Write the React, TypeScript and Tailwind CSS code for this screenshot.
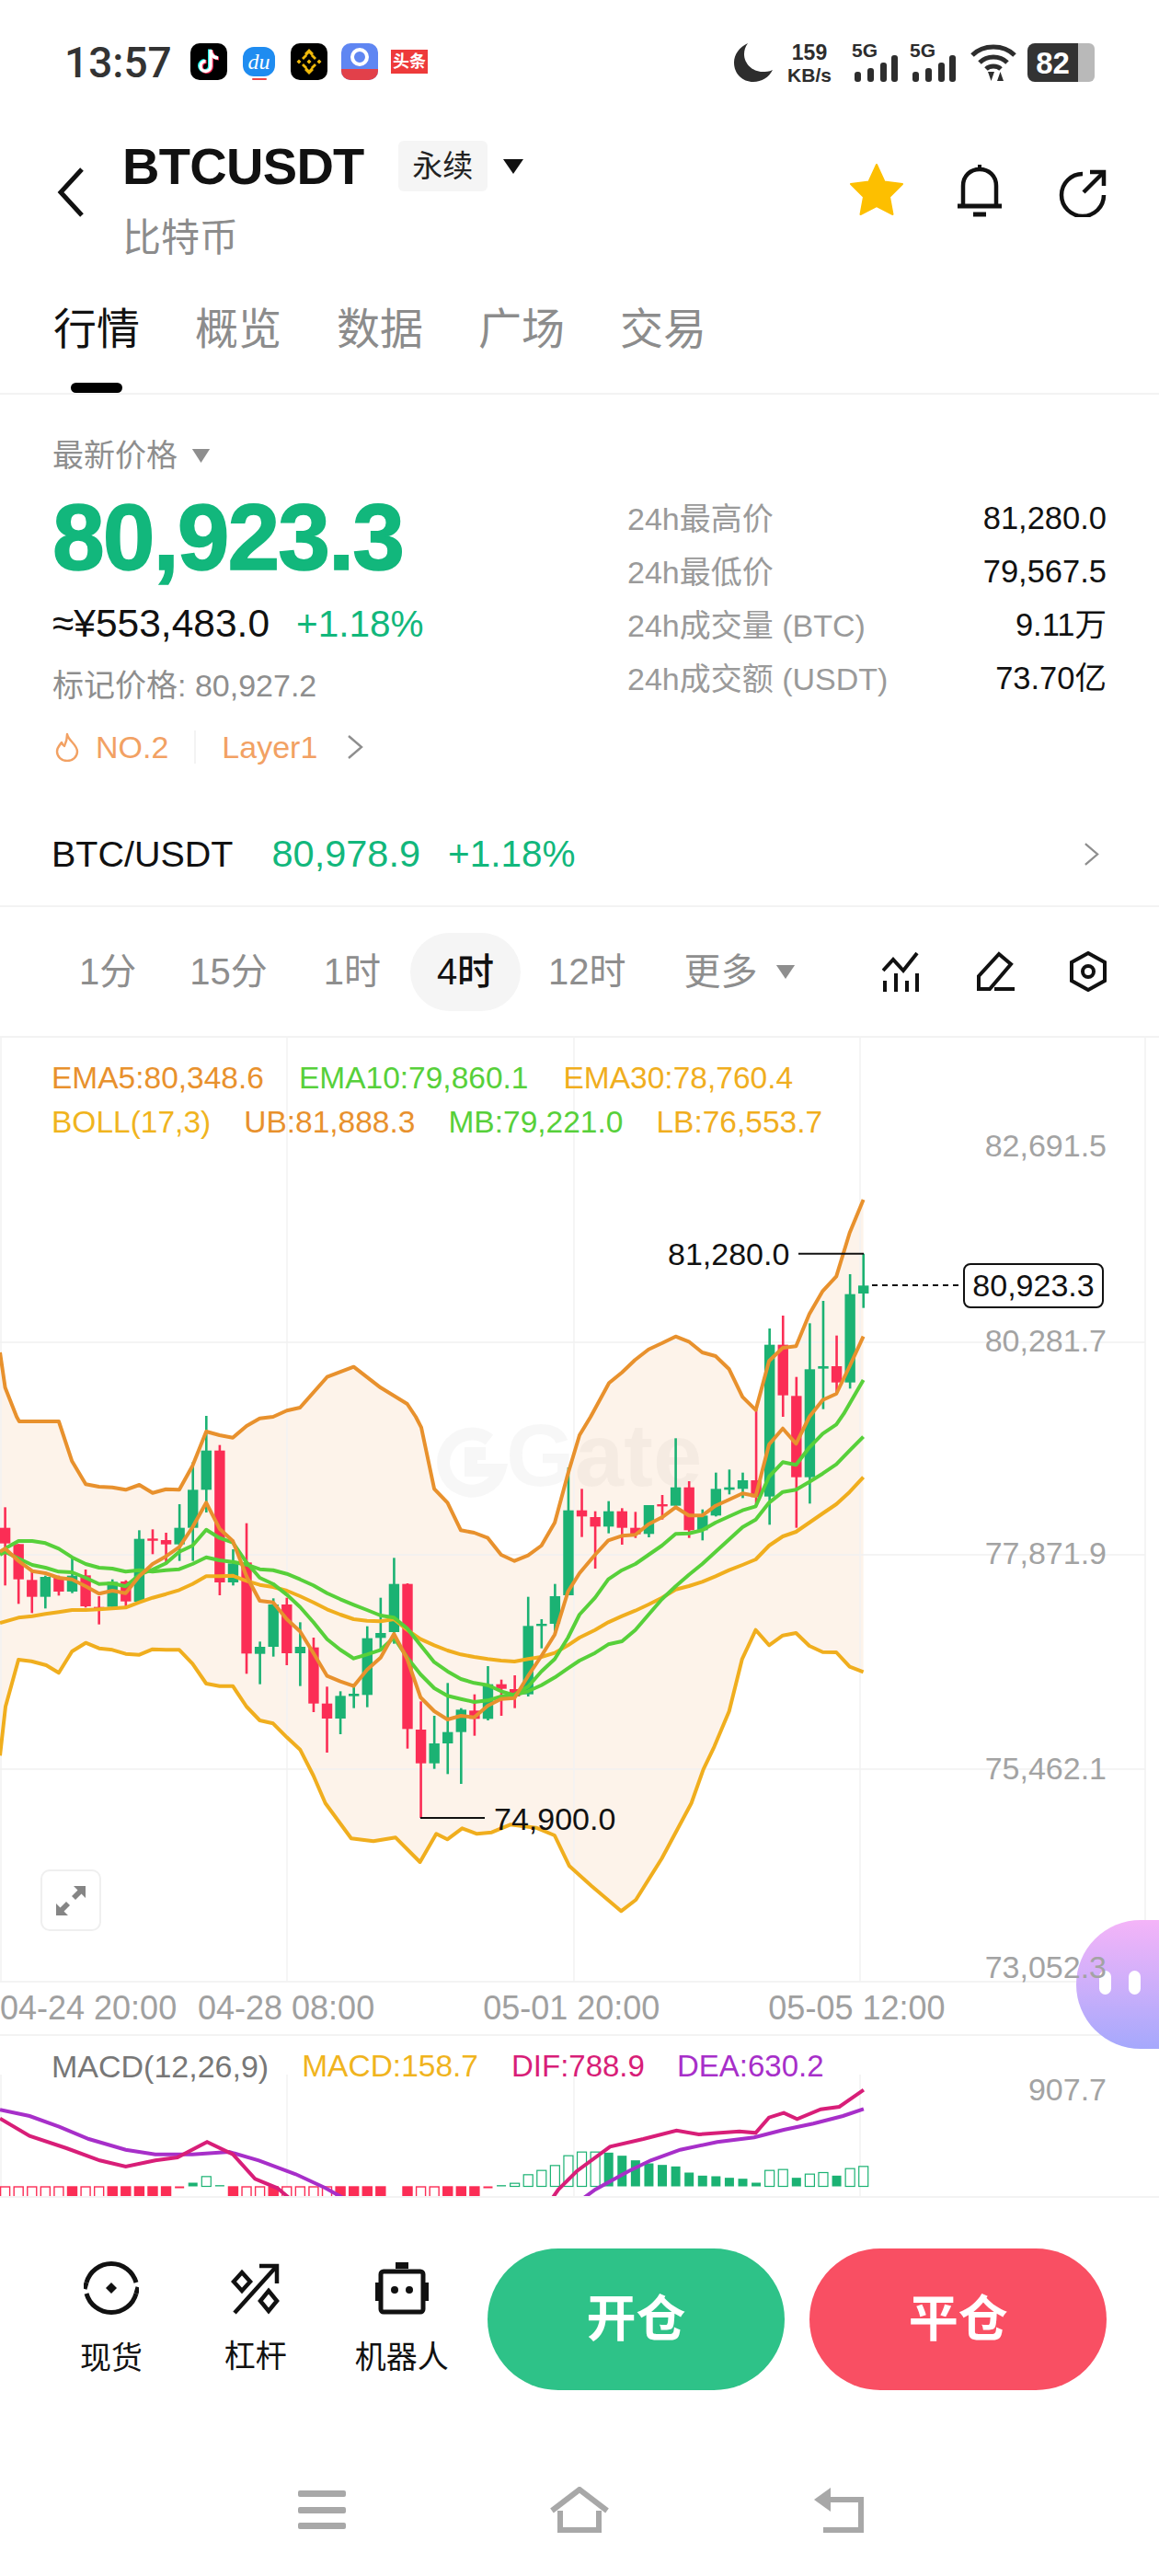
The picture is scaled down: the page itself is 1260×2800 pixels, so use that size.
import React from "react";

const L = (x: number) => x / 2.489;
const R = (x: number) => 630 + x / 2.489;
const Z = (x: number) => x / 1.244;
const Y3 = (y: number) => 1120 + y / 3;
const Y5 = (y: number) => 1540 + y / 3;
const Y7 = (y: number) => 1960 + y / 3;

type P = [number, number];
function seg(fx: (n: number) => number, fy: (n: number) => number, v: number[]): P[] {
  const out: P[] = [];
  for (let i = 0; i < v.length; i += 2) out.push([fx(v[i]), fy(v[i + 1])]);
  return out;
}
const str = (p: P[]) => p.map((a) => a[0].toFixed(1) + "," + a[1].toFixed(1)).join(" ");

const UB: P[] = [
  ...seg(L, Y3, [0, 1050, 14, 1165, 45, 1260]),
  ...seg(L, Y5, [52, 15, 159, 15, 195, 145, 232, 220, 268, 228, 304, 230, 340, 238, 377, 222, 413, 248, 449, 236, 485, 238, 521, 160, 558, 48, 594, 60, 630, 68, 667, 30, 703, 5]),
  ...seg(L, Y3, [739, 1260, 776, 1240, 812, 1230, 885, 1130, 957, 1097, 1030, 1165, 1102, 1218, 1125, 1260]),
  ...seg(L, Y5, [1140, 35, 1175, 235, 1211, 280, 1247, 370, 1283, 378, 1320, 395, 1356, 450, 1392, 470, 1429, 452, 1465, 420, 1501, 345, 1537, 185, 1568, 60]),
  ...seg(R, Y3, [30, 1260, 80, 1150, 115, 1115, 150, 1075, 187, 1040, 223, 1020, 260, 998, 296, 1015, 332, 1050, 368, 1062, 405, 1105, 441, 1195, 477, 1238, 513, 1078, 550, 1035, 586, 1030, 622, 925, 658, 850, 695, 802, 731, 660, 768, 552]),
];
const LB: P[] = [
  ...seg(L, Y5, [0, 1105, 15, 945, 50, 792, 85, 797, 125, 810, 159, 835, 195, 765, 232, 737, 268, 755, 304, 760, 340, 773, 377, 776, 413, 758, 449, 760, 485, 760, 521, 805, 558, 870, 594, 878, 630, 878, 667, 945, 703, 990, 739, 1000, 776, 1045, 812, 1085, 848, 1170]),
  ...seg(Z, Y7, [440, 0, 475, 115, 505, 124, 535, 112, 568, 192, 590, 100, 605, 118, 625, 82, 645, 100, 665, 95, 690, 70, 725, 80, 750, 105, 770, 205, 800, 270, 840, 352, 860, 315, 895, 180, 935, 0]),
  ...seg(R, Y5, [335, 1150, 365, 1075, 405, 960, 440, 790, 477, 695, 513, 745, 550, 713, 586, 705, 622, 747, 658, 767, 695, 768, 731, 815, 768, 832]),
];
const EMA5: P[] = [
  ...seg(L, Y5, [0, 440, 14, 430, 50, 470, 87, 503, 123, 510, 159, 525, 195, 530, 232, 553, 268, 577, 304, 567, 340, 575, 377, 520, 413, 480, 449, 455, 485, 425, 521, 360, 558, 280, 594, 365, 630, 405, 667, 520, 703, 600, 739, 605, 776, 660, 812, 700, 848, 770, 885, 845, 921, 863, 957, 878, 993, 825, 1030, 785, 1066, 708, 1102, 790, 1138, 915, 1175, 960, 1211, 987, 1247, 975, 1283, 980, 1320, 942, 1356, 920, 1392, 917, 1429, 845, 1465, 780, 1501, 710, 1537, 570]),
  ...seg(R, Y5, [0, 510, 42, 450, 78, 403, 115, 388, 151, 385, 187, 350, 223, 328, 260, 295, 296, 322, 332, 322, 368, 290, 405, 270, 441, 250, 477, 258, 513, 90, 550, 38, 586, 88, 622, 0]),
  ...seg(R, Y3, [658, 1205, 695, 1185, 731, 1095, 768, 998]),
];
const EMA30: P[] = [
  ...seg(L, Y5, [0, 672, 50, 655, 87, 650, 123, 643, 159, 637, 195, 630, 232, 630, 268, 628, 304, 625, 340, 622, 377, 605, 413, 590, 449, 578, 485, 565, 521, 545, 558, 520, 594, 520, 630, 518, 667, 535, 703, 548, 739, 555, 776, 567, 812, 585, 848, 605, 885, 628, 921, 645, 957, 660, 993, 665, 1030, 667, 1066, 660, 1102, 695, 1138, 725, 1175, 745, 1211, 762, 1247, 775, 1283, 783, 1320, 790, 1356, 795, 1392, 798, 1429, 790, 1465, 783, 1501, 770, 1537, 745]),
  ...seg(R, Y5, [0, 720, 42, 695, 78, 670, 115, 650, 151, 632, 187, 612, 223, 590, 260, 563, 296, 552, 332, 538, 368, 520, 405, 500, 441, 483, 477, 465, 513, 420, 550, 390, 586, 375, 622, 345, 658, 315, 695, 285, 731, 245, 768, 197]),
];
const MB: P[] = [
  ...seg(L, Y5, [0, 445, 20, 425, 50, 405, 87, 405, 123, 412, 159, 430, 195, 458, 232, 480, 268, 492, 304, 495, 340, 505, 377, 500, 413, 505, 449, 500, 485, 497, 521, 480, 558, 458, 594, 468, 630, 473, 667, 482, 703, 497, 739, 500, 776, 512, 812, 530, 848, 550, 885, 575, 921, 595, 957, 613, 993, 630, 1030, 648, 1066, 655, 1102, 690, 1138, 745, 1175, 800, 1211, 830, 1247, 855, 1283, 868, 1320, 875, 1356, 895, 1392, 908, 1429, 895, 1465, 875, 1501, 850, 1537, 820]),
  ...seg(R, Y5, [0, 795, 42, 770, 78, 742, 115, 732, 151, 695, 187, 645, 223, 595, 260, 553, 296, 515, 332, 480, 368, 440, 405, 400, 441, 360, 477, 335, 513, 280, 550, 245, 586, 238, 622, 212, 658, 185, 695, 155, 731, 110, 768, 65]),
];
const EMA10: P[] = [
  ...seg(L, Y5, [0, 450, 14, 440, 50, 462, 87, 483, 123, 492, 159, 505, 195, 507, 232, 525, 268, 545, 304, 543, 340, 553, 377, 515, 413, 498, 449, 478, 485, 440, 521, 420, 558, 368, 594, 395, 630, 410, 667, 475, 703, 525, 739, 545, 776, 580, 812, 620, 848, 670, 885, 725, 921, 760, 957, 788, 993, 775, 1030, 760, 1066, 720, 1102, 785, 1138, 840, 1175, 885, 1211, 910, 1247, 920, 1283, 930, 1320, 925, 1356, 912, 1392, 905, 1429, 880, 1465, 830, 1501, 790, 1537, 720]),
  ...seg(R, Y5, [0, 645, 42, 590, 78, 530, 115, 500, 151, 480, 187, 450, 223, 420, 260, 382, 296, 380, 332, 370, 368, 345, 405, 325, 441, 305, 477, 292, 513, 195, 550, 148, 586, 157, 622, 100, 658, 55, 695, 25, 715, -10]),
  ...seg(R, Y3, [768, 1140]),
];

// [isGreen, wickTop, bodyTop, bodyBottom, wickBottom] in lower-crop units
const C: [number, number, number, number, number][] = [
  [0, 295, 362, 413, 550], [0, 415, 415, 530, 610], [0, 500, 532, 587, 640], [1, 518, 522, 587, 625], [0, 518, 525, 570, 583],
  [1, 462, 518, 570, 575], [0, 498, 517, 618, 622], [0, 585, 620, 623, 677], [1, 530, 538, 620, 620], [0, 533, 537, 602, 620],
  [1, 370, 398, 603, 605], [0, 367, 397, 401, 448], [0, 378, 402, 416, 480], [1, 285, 362, 416, 470], [1, 148, 238, 362, 470],
  [1, -3, 110, 238, 312], [0, 92, 110, 540, 582], [1, 432, 478, 540, 550], [0, 347, 475, 772, 838], [1, 733, 750, 773, 872],
  [1, 592, 612, 750, 782], [0, 590, 612, 771, 810], [1, 670, 750, 771, 878], [0, 720, 752, 935, 963], [0, 880, 935, 984, 1095],
  [1, 895, 910, 984, 1035], [1, 870, 903, 911, 950], [1, 683, 722, 907, 947], [1, 590, 705, 721, 760], [1, 460, 545, 702, 740],
  [0, 543, 545, 1018, 1082], [0, 928, 1020, 1130, 1308], [1, 975, 1065, 1130, 1148], [1, 868, 1028, 1065, 1165], [1, 950, 955, 1028, 1197],
  [0, 905, 958, 985, 1040], [1, 813, 872, 985, 990], [0, 857, 872, 887, 975], [0, 843, 888, 912, 950], [1, 587, 682, 905, 912],
  [1, 660, 675, 682, 755], [1, 545, 585, 675, 700], [1, 165, 305, 582, 582], [0, 235, 305, 325, 392], [0, 308, 327, 358, 495],
  [1, 275, 308, 358, 380], [0, 298, 308, 362, 417], [0, 310, 362, 383, 395], [1, 288, 288, 382, 393], [0, 255, 285, 292, 335],
  [1, 70, 230, 290, 295], [0, 210, 230, 370, 395], [1, 302, 322, 370, 403], [1, 182, 235, 322, 325], [1, 172, 230, 238, 253],
  [1, 182, 207, 235, 265], [0, -30, 207, 262, 290], [1, -288, -235, 260, 352], [0, -330, -235, -70, 0], [0, -130, -68, 197, 362],
  [1, -305, -155, 197, 283], [1, -378, -165, -157, -25], [0, -265, -165, -112, -80], [1, -465, -400, -112, -92], [1, -532, -428, -402, -355],
];

const green = "#1bb273";
const red = "#fb2d55";
const orange = "#e8912d";
const yellow = "#f0ae1e";
const lime = "#57d03a";

const cx = (i: number) => 5.6 + 14.58 * i;

const RED_BARS: [number, boolean][] = [
  [0, false], [1, false], [2, false], [3, false], [4, false], [5, true], [6, false], [7, false], [8, true], [9, true], [10, true], [11, true], [12, true],
  [17, true], [18, false], [19, false], [20, true], [21, false], [22, false], [23, false], [24, false], [25, true], [26, true], [27, true], [28, true],
  [30, true], [31, false], [32, false], [33, true], [34, true], [35, true],
];
const GREEN_BARS: [number, number, boolean][] = [
  [14, 12, true], [15, 32, false], [16, 4, true], [37, 4, true], [38, 10, false], [39, 38, false], [40, 52, false], [41, 68, false], [42, 100, false], [43, 112, false],
  [44, 112, false], [45, 110, true], [46, 100, true], [47, 85, true], [48, 75, true], [49, 70, true], [50, 65, true], [51, 45, true], [52, 35, true], [53, 33, true],
  [54, 28, true], [55, 25, true], [56, 12, true], [57, 52, false], [58, 55, false], [59, 28, true], [60, 40, false], [61, 45, false], [62, 35, true], [63, 58, false], [64, 65, false],
];
const DEA1 = seg(Z, Y7, [0, 1000, 40, 1020, 80, 1055, 120, 1095, 170, 1130, 210, 1145, 260, 1145, 310, 1137, 350, 1165, 400, 1210, 440, 1255, 470, 1295]);
const DEA2 = seg(Z, Y7, [785, 1295, 805, 1260, 850, 1200, 880, 1165, 920, 1130, 970, 1105, 1020, 1090, 1060, 1065, 1100, 1045, 1140, 1020, 1168, 997]);
const DIF1 = seg(Z, Y7, [0, 1028, 40, 1085, 90, 1125, 135, 1165, 170, 1185, 210, 1165, 240, 1155, 280, 1105, 315, 1145, 345, 1225, 375, 1255, 395, 1295]);
const DIF2 = seg(Z, Y7, [745, 1295, 755, 1260, 780, 1200, 825, 1120, 870, 1095, 915, 1067, 945, 1080, 1000, 1070, 1022, 1075, 1040, 1025, 1060, 1010, 1078, 1030, 1110, 998, 1135, 990, 1168, 935]);

const LW = "4";

function MainChart() {
  return (
    <svg className="absolute left-0 top-0" width="1260" height="1025" viewBox="0 1128 1260 1025">
      <polygon points={str([...UB, ...[...LB].reverse()])} fill="#fdf3ea" />
      {[1459, 1690, 1923].map((y) => (
        <line key={y} x1="0" x2="1245" y1={y} y2={y} stroke="#f0f0f0" strokeWidth="1.5" />
      ))}
      {[1, 312, 624, 935, 1245].map((x) => (
        <line key={x} x1={x} x2={x} y1="1128" y2="2153" stroke="#f2f2f2" strokeWidth="1.5" />
      ))}
      <path d="M532 1565 A31 31 0 1 0 543 1598 L512 1598 L512 1580 L528 1580" fill="none" stroke="#000" strokeOpacity="0.03" strokeWidth="14" />
      <text x="550" y="1615" fontFamily="Liberation Sans" fontWeight="700" fontSize="96" fill="#000" fillOpacity="0.03">Gate</text>
      {C.map((c, i) => {
        const x = cx(i);
        const col = c[0] ? green : red;
        return (
          <g key={i}>
            <rect x={x - 1.3} y={Y5(c[1])} width="2.6" height={(c[4] - c[1]) / 3} fill={col} />
            <rect x={x - 5.7} y={Y5(c[2])} width="11.4" height={Math.max(2.4, (c[3] - c[2]) / 3)} fill={col} />
          </g>
        );
      })}
      <polyline points={str(UB)} fill="none" stroke={orange} strokeWidth={LW} strokeLinejoin="round" />
      <polyline points={str(LB)} fill="none" stroke={yellow} strokeWidth={LW} strokeLinejoin="round" />
      <polyline points={str(EMA30)} fill="none" stroke={yellow} strokeWidth={LW} strokeLinejoin="round" />
      <polyline points={str(MB)} fill="none" stroke={lime} strokeWidth={LW} strokeLinejoin="round" />
      <polyline points={str(EMA10)} fill="none" stroke={lime} strokeWidth={LW} strokeLinejoin="round" />
      <polyline points={str(EMA5)} fill="none" stroke={orange} strokeWidth={LW} strokeLinejoin="round" />
      <path d="M868 1362.7H939" stroke="#111" strokeWidth="2" />
      <path d="M457 1976H527" stroke="#111" strokeWidth="2" />
      <path d="M948 1397H1046" stroke="#111" strokeWidth="2" strokeDasharray="6 5" />
    </svg>
  );
}

function MacdChart() {
  return (
    <svg className="absolute left-0 top-0" width="1260" height="175" viewBox="0 2213 1260 175">
      {[1, 312, 624, 935].map((x) => (
        <line key={x} x1={x} x2={x} y1="2255" y2="2388" stroke="#f2f2f2" strokeWidth="1.5" />
      ))}
      {RED_BARS.map(([i, f]) => (
        <rect key={i} x={cx(i) - 5} y="2377" width="10" height="14" fill={f ? red : "#fff"} stroke={red} strokeWidth="1.4" />
      ))}
      <rect x={cx(13) - 5} y="2376.5" width="10" height="2" fill={red} />
      <rect x={cx(36) - 5} y="2376.5" width="10" height="2" fill={red} />
      {GREEN_BARS.map(([i, h, f]) => (
        <rect key={i} x={cx(i) - 5} y={2376.5 - h / 3} width="10" height={h / 3} fill={f ? green : "#fff"} stroke={green} strokeWidth={f ? 0 : 1.2} />
      ))}
      <polyline points={str(DEA1)} fill="none" stroke="#a72fc9" strokeWidth={LW} />
      <polyline points={str(DIF1)} fill="none" stroke="#d81e78" strokeWidth={LW} />
      <polyline points={str(DIF2)} fill="none" stroke="#d81e78" strokeWidth={LW} />
      <polyline points={str(DEA2)} fill="none" stroke="#a72fc9" strokeWidth={LW} />
    </svg>
  );
}

function Signal() {
  return (
    <div className="relative h-[42px] w-[47px]">
      <span className="absolute left-[-3px] top-[-1px] text-[21px] leading-[18px] font-bold text-[#2d2d2d]">5G</span>
      <svg className="absolute left-0 top-0" width="47" height="42" viewBox="0 0 47 42" fill="#2d2d2d">
        <rect x="0" y="31" width="7" height="11" rx="3" />
        <rect x="14" y="27" width="7" height="15" rx="3" />
        <rect x="28" y="21" width="7" height="21" rx="3" />
        <rect x="40" y="13" width="7" height="29" rx="3" />
      </svg>
    </div>
  );
}

function Caret({ w, h, c }: { w: number; h: number; c: string }) {
  return (
    <svg width={w} height={h} viewBox="0 0 24 16" preserveAspectRatio="none">
      <path d="M1 0H23L12 16Z" fill={c} />
    </svg>
  );
}

function Chevron({ c, w, h }: { c: string; w: number; h: number }) {
  return (
    <svg width={w} height={h} viewBox="0 0 18 26" fill="none">
      <path d="M2 1L16 13L2 25" stroke={c} strokeWidth="2.4" />
    </svg>
  );
}

function TF({ t, cls }: { t: string; cls: string }) {
  return <span className={"text-[40px] leading-[46px] text-[#8e8e8e] " + cls}>{t}</span>;
}

function Stat({ a, b }: { a: string; b: string }) {
  return (
    <div className="flex h-[58px] items-center justify-between">
      <span className="text-[34px] text-[#9a9a9a]">{a}</span>
      <span className="text-[34.5px] text-[#111]">{b}</span>
    </div>
  );
}

export default function App() {
  return (
    <div className="relative h-[2800px] w-[1260px] overflow-hidden bg-white [font-family:'Liberation_Sans','Noto_Sans_CJK_SC',sans-serif] text-[#111]">
      {/* status bar */}
      <div className="flex h-[100px] items-start pl-[70px] pt-[47px] pr-[70px]">
        <span className="w-[117px] text-[46px] leading-[42px] font-medium text-[#333] [font-family:Roboto,sans-serif]">13:57</span>
        <div className="ml-[20px] flex gap-[14.5px]">
          <div className="flex h-[40px] w-[40px] items-center justify-center rounded-[10px] bg-black">
            <svg width="26" height="30" viewBox="0 0 26 30" fill="none">
              <path d="M15 2V20a5.5 5.5 0 1 1-5.5-5.5" stroke="#25f4ee" strokeWidth="4" transform="translate(-1 -0.5)" />
              <path d="M15 4c1 4 4 7 8 7" stroke="#25f4ee" strokeWidth="4" transform="translate(-1 -0.5)" />
              <path d="M15 2V20a5.5 5.5 0 1 1-5.5-5.5" stroke="#fe2c55" strokeWidth="4" transform="translate(1 0.5)" />
              <path d="M15 4c1 4 4 7 8 7" stroke="#fe2c55" strokeWidth="4" transform="translate(1 0.5)" />
              <path d="M15 2V20a5.5 5.5 0 1 1-5.5-5.5" stroke="#fff" strokeWidth="3.4" />
              <path d="M15 4c1 4 4 7 8 7" stroke="#fff" strokeWidth="3.4" />
            </svg>
          </div>
          <div className="relative flex h-[40px] w-[40px] items-start justify-center">
            <div className="mt-[4px] flex h-[32px] w-[35px] items-center justify-center rounded-[12px] bg-[#1f8cf0] text-[24px] italic leading-none text-white [font-family:'Liberation_Serif',serif]">du</div>
            <div className="absolute bottom-0 h-[2px] w-[16px] rounded-full bg-[#e44]" />
          </div>
          <div className="flex h-[40px] w-[40px] items-center justify-center rounded-[10px] bg-black">
            <svg width="30" height="30" viewBox="0 0 30 30" fill="#f0b90b">
              <path d="M15 1l5 5-2.500 2.500L15 6l-2.500 2.500L10 6zM15 24l2.500-2.500L20 24l-5 5-5-5 2.500-2.500zM4 12.500L6.500 15 4 17.500 1.500 15zM26 12.500L28.500 15 26 17.500 23.500 15zM15 12.500l2.500 2.500-2.500 2.500-2.500-2.500zM9 13l-2-2 4-4 2 2zM21 13l2-2-4-4-2 2zM9 17l-2 2 4 4 2-2zM21 17l2 2-4 4-2-2z" />
            </svg>
          </div>
          <div className="relative flex h-[40px] w-[40px] items-start justify-center overflow-hidden rounded-[10px] bg-[#5f86f2]">
            <div className="mt-[5px] h-[20px] w-[20px] rounded-full border-[4px] border-white" />
            <div className="absolute bottom-0 h-[12px] w-full bg-[#e2404a]" />
          </div>
          <div className="flex h-[40px] w-[40px] items-center justify-center bg-white">
            <div className="flex h-[26px] w-full items-center justify-center bg-[#ee3a3a] text-[18px] font-bold leading-none text-white">头条</div>
          </div>
        </div>
        <div className="ml-auto flex items-start">
          <svg width="42" height="42" viewBox="0 0 42 42">
            <path d="M15 0C6 4 0 12 0 21c0 12 9 21 21 21 9 0 17-5 21-13-4 2-8 2-11 2C20 31 11 22 11 12c0-4 1-8 4-12z" fill="#2d2d2d" />
          </svg>
          <div className="ml-[15px] flex w-[50px] flex-col items-center font-bold text-[#2d2d2d]">
            <span className="text-[23px] leading-[20px]">159</span>
            <span className="mt-[7px] text-[21px] leading-[15px]">KB/s</span>
          </div>
          <div className="ml-[24px]"><Signal /></div>
          <div className="ml-[16px]"><Signal /></div>
          <svg className="ml-[16px]" width="50" height="41" viewBox="0 0 50 41" fill="none">
            <path d="M2 13C14 1 36 1 48 13" stroke="#2d2d2d" strokeWidth="5" />
            <path d="M10 21C18 13 32 13 40 21" stroke="#2d2d2d" strokeWidth="5" />
            <path d="M17 28C21 24 29 24 33 28" stroke="#2d2d2d" strokeWidth="5" />
            <path d="M19 31h7l-3.500 10zM29 41h7l-3.500-10z" fill="#2d2d2d" />
          </svg>
          <div className="ml-[12px] flex h-[42px] w-[73px]">
            <div className="flex h-full w-[55px] items-center justify-center rounded-l-[8px] bg-[#333] text-[33px] font-bold leading-none text-white">82</div>
            <div className="h-full w-[18px] rounded-r-[6px] bg-[#b9b9b9]" />
          </div>
        </div>
      </div>

      {/* header */}
      <div className="flex h-[200px]">
        <svg className="ml-[62px] mt-[82px]" width="30" height="54" viewBox="0 0 30 54" fill="none">
          <path d="M27 2L4 27L27 52" stroke="#111" strokeWidth="5" />
        </svg>
        <div className="ml-[41px] flex flex-col">
          <div className="mt-[53px] flex items-center">
            <span className="text-[56px] leading-[54px] font-bold tracking-[-0.7px]">BTCUSDT</span>
            <span className="ml-[37px] flex h-[55px] w-[97px] items-center justify-center rounded-[6px] bg-[#f5f5f5] text-[33px] text-[#222]">永续</span>
            <span className="ml-[16px]"><Caret w={24} h={16} c="#111" /></span>
          </div>
          <span className="mt-[29px] text-[42px] leading-[44px] text-[#8c8c8c]">比特币</span>
        </div>
        <div className="ml-auto mr-[56px] mt-[78px] flex items-start">
          <svg width="60" height="56" viewBox="0 0 60 56">
            <path d="M30 1L38.500 19.500L58 22L44 36L47.500 55L30 46L12.500 55L16 36L2 22L21.500 19.500Z" fill="#fdbf00" stroke="#fdbf00" strokeWidth="2" strokeLinejoin="round" />
          </svg>
          <svg className="ml-[57px]" width="50" height="58" viewBox="0 0 50 58" fill="none">
            <path d="M25 1V7" stroke="#111" strokeWidth="4" />
            <path d="M7 46V24C7 13 15 6 25 6S43 13 43 24V46" stroke="#111" strokeWidth="4.500" />
            <path d="M1 46H49" stroke="#111" strokeWidth="5" />
            <path d="M18 55H32" stroke="#111" strokeWidth="5" />
          </svg>
          <svg className="ml-[60px] mt-[6px]" width="54" height="52" viewBox="0 0 54 52" fill="none">
            <path d="M27 5A23 23 0 1 0 50 28" stroke="#111" strokeWidth="4.500" />
            <path d="M28 25L50 3" stroke="#111" strokeWidth="4.500" />
            <path d="M35 3H50V18" stroke="#111" strokeWidth="4.500" />
          </svg>
        </div>
      </div>

      {/* tabs */}
      <div className="relative h-[129px] border-b-2 border-[#f3f3f3] pl-[58px]">
        <div className="flex gap-[60px] pt-[33px] text-[47px] leading-[50px] text-[#8c8c8c]">
          <span className="text-[#111]">行情</span>
          <span>概览</span>
          <span>数据</span>
          <span>广场</span>
          <span>交易</span>
        </div>
        <div className="absolute bottom-[0px] left-[77px] h-[11px] w-[56px] rounded-full bg-black" />
      </div>

      {/* ticker */}
      <div className="relative h-[384px] pl-[57px] pr-[57px]">
        <div className="flex justify-between">
          <div className="flex flex-col">
            <div className="mt-[47px] flex items-center">
              <span className="text-[34px] leading-[38px] text-[#8e8e8e]">最新价格</span>
              <span className="ml-[15px]"><Caret w={21} h={15} c="#8e8e8e" /></span>
            </div>
            <span className="mt-[20px] text-[102px] leading-[100px] font-bold tracking-[-2px] text-[#12b77c] [-webkit-text-stroke:1.5px_#12b77c]">80,923.3</span>
            <div className="mt-[21px] flex items-center text-[42.5px] leading-[46px]">
              <span>≈¥553,483.0</span>
              <span className="ml-[29px] text-[40.5px] text-[#12b77c]">+1.18%</span>
            </div>
            <span className="mt-[24px] text-[34px] leading-[40px] text-[#8e8e8e]">标记价格: 80,927.2</span>
            <div className="mt-[27px] flex items-center text-[34px] leading-[40px] text-[#f2a163]">
              <svg className="ml-[3px]" width="26" height="32" viewBox="0 0 26 32" fill="none">
                <path d="M13 2C14 9 24 13 24 21A11 10 0 0 1 2 21C2 16 5 14 7 11C8 14 10 15 10 15C12 11 13 7 13 2Z" stroke="#f2a163" strokeWidth="2.400" strokeLinejoin="round" />
              </svg>
              <span className="ml-[18px]">NO.2</span>
              <span className="ml-[28px] h-[36px] w-[2px] bg-[#f3f3f3]" />
              <span className="ml-[28px]">Layer1</span>
              <span className="ml-[32px]"><Chevron c="#8e8e8e" w={18} h={26} /></span>
            </div>
          </div>
          <div className="mt-[106px] flex w-[521px] flex-col">
            <Stat a="24h最高价" b="81,280.0" />
            <Stat a="24h最低价" b="79,567.5" />
            <Stat a="24h成交量 (BTC)" b="9.11万" />
            <Stat a="24h成交额 (USDT)" b="73.70亿" />
          </div>
        </div>
      </div>

      {/* spot row */}
      <div className="flex h-[173px] items-end border-b-2 border-[#f3f3f3] pb-[33px] pl-[56px] pr-[65px] text-[39.5px] leading-[46px]">
        <span>BTC/USDT</span>
        <span className="ml-[42px] text-[41.5px] text-[#12b77c]">80,978.9</span>
        <span className="ml-[30px] text-[40.5px] text-[#12b77c]">+1.18%</span>
        <span className="ml-auto mb-[10px]"><Chevron c="#8e8e8e" w={17} h={25} /></span>
      </div>

      {/* timeframes */}
      <div className="relative flex h-[142px] items-center border-b-2 border-[#f3f3f3] pl-[86px] pr-[57px]">
        <TF t="1分" cls="" />
        <TF t="15分" cls="ml-[58px]" />
        <TF t="1时" cls="ml-[61px]" />
        <span className="ml-[32px] flex h-[85px] w-[120px] items-center justify-center rounded-full bg-[#f5f5f5] text-[40px] font-medium text-[#111]">4时</span>
        <TF t="12时" cls="ml-[30px]" />
        <TF t="更多" cls="ml-[63px]" />
        <span className="ml-[19px]"><Caret w={22} h={15} c="#8e8e8e" /></span>
        <svg className="ml-auto" width="40" height="44" viewBox="0 0 40 44" fill="none" stroke="#111" strokeWidth="4">
          <path d="M1 21L12 9L23 21L38 2" />
          <path d="M3 32V44M15 24V44M27 32V44M38 24V44" />
        </svg>
        <svg className="ml-[62px]" width="42" height="44" viewBox="0 0 42 44" fill="none" stroke="#111" strokeWidth="4">
          <path d="M3 41V27L25 3L38 14L15 41Z" />
          <path d="M20 41H42" />
        </svg>
        <svg className="ml-[60px]" width="40" height="44" viewBox="0 0 40 44" fill="none" stroke="#111" strokeWidth="4">
          <path d="M20 2L38 12V32L20 42L2 32V12Z" />
          <circle cx="20" cy="22" r="6" />
        </svg>
      </div>

      {/* main chart */}
      <div className="relative h-[1025px]">
        <MainChart />
        <div className="absolute left-[56px] top-[20px] text-[33.5px] leading-[48px]">
          <div className="flex gap-[38px]">
            <span className="text-[#e8912d]">EMA5:80,348.6</span>
            <span className="text-[#57d03a]">EMA10:79,860.1</span>
            <span className="text-[#f0ae1e]">EMA30:78,760.4</span>
          </div>
          <div className="flex gap-[36px]">
            <span className="text-[#f0b41e]">BOLL(17,3)</span>
            <span className="text-[#e8912d]">UB:81,888.3</span>
            <span className="text-[#57d03a]">MB:79,221.0</span>
            <span className="text-[#f0ae1e]">LB:76,553.7</span>
          </div>
        </div>
        <span className="absolute right-[57px] top-[97px] text-[34px] leading-[40px] text-[#a3a3a3]">82,691.5</span>
        <span className="absolute right-[57px] top-[309px] text-[34px] leading-[40px] text-[#a3a3a3]">80,281.7</span>
        <span className="absolute right-[57px] top-[540px] text-[34px] leading-[40px] text-[#a3a3a3]">77,871.9</span>
        <span className="absolute right-[57px] top-[774px] text-[34px] leading-[40px] text-[#a3a3a3]">75,462.1</span>
        <span className="absolute right-[57px] top-[990px] z-10 text-[34px] leading-[40px] text-[#a3a3a3]">73,052.3</span>
        <span className="absolute left-[726px] top-[215px] text-[34px] leading-[40px] text-[#111]">81,280.0</span>
        <span className="absolute left-[537px] top-[829px] text-[34px] leading-[40px] text-[#111]">74,900.0</span>
        <span className="absolute left-[1047px] top-[245px] flex h-[49px] w-[153px] items-center justify-center rounded-[8px] border-2 border-[#111] bg-white text-[34px] text-[#111]">80,923.3</span>
        <div className="absolute left-[44px] top-[904px] flex h-[67px] w-[66px] items-center justify-center rounded-[10px] border-2 border-[#efefef] bg-white">
          <svg width="32" height="32" viewBox="0 0 32 32" fill="#858585">
            <path d="M19 0H32V13L27.500 8.500L21 15L17 11L23.500 4.500Z" />
            <path d="M13 32H0V19L4.500 23.500L11 17L15 21L8.500 27.500Z" />
          </svg>
        </div>
      </div>

      {/* time axis */}
      <div className="flex h-[60px] items-center border-y-2 border-[#f3f3f3] text-[36px] leading-[40px] text-[#a0a0a0]">
        <span className="w-[195px] whitespace-nowrap">04-24 20:00</span>
        <span className="ml-[20px] whitespace-nowrap">04-28 08:00</span>
        <span className="ml-[118px] whitespace-nowrap">05-01 20:00</span>
        <span className="ml-[118px] whitespace-nowrap">05-05 12:00</span>
      </div>

      {/* macd */}
      <div className="relative h-[176px] overflow-hidden border-b-2 border-[#f3f3f3]">
        <MacdChart />
        <div className="absolute left-[56px] top-[11px] flex text-[33px] leading-[44px]">
          <span className="text-[34px] text-[#777]">MACD(12,26,9)</span>
          <span className="ml-[36px] text-[33.5px] text-[#f0b41e]">MACD:158.7</span>
          <span className="ml-[36px] text-[#d81e78]">DIF:788.9</span>
          <span className="ml-[35px] text-[#a72fc9]">DEA:630.2</span>
        </div>
        <span className="absolute right-[57px] top-[38px] text-[34px] leading-[40px] text-[#a3a3a3]">907.7</span>
      </div>

      {/* actions */}
      <div className="flex pl-[56px] pr-[57px] pt-[55px]">
        <div className="flex w-[130px] flex-col items-center">
          <svg className="mt-[13px]" width="60" height="60" viewBox="0 0 60 60" fill="none" stroke="#111" strokeWidth="5">
            <path d="M3 24A28 28 0 0 1 57 24" />
            <path d="M3 36A28 28 0 0 0 57 36" />
            <path d="M3 24L1 31M57 36L59 29" />
            <path d="M30 24L36 30L30 36L24 30Z" fill="#111" stroke="none" />
          </svg>
          <span className="mt-[26px] text-[34px] leading-[40px]">现货</span>
        </div>
        <div className="ml-[27px] flex w-[130px] flex-col items-center">
          <svg className="mt-[16px]" width="54" height="56" viewBox="0 0 54 56" fill="none" stroke="#111" strokeWidth="4.500">
            <path d="M4 54L50 3" />
            <path d="M31 3H50V22" />
            <path d="M12 10L21 20L12 30L3 20Z" />
            <path d="M41 30L50 41L41 52L32 41Z" />
          </svg>
          <span className="mt-[25px] text-[34px] leading-[40px]">杠杆</span>
        </div>
        <div className="ml-[29px] flex w-[130px] flex-col items-center">
          <svg className="mt-[15px]" width="58" height="58" viewBox="0 0 58 58" fill="none">
            <rect x="22" y="0" width="14" height="7" fill="#111" />
            <rect x="6" y="10" width="46" height="44" rx="3" stroke="#111" strokeWidth="5" />
            <rect x="0" y="22" width="5" height="20" fill="#111" />
            <rect x="53" y="22" width="5" height="20" fill="#111" />
            <circle cx="21" cy="30" r="4" fill="#111" />
            <circle cx="37" cy="30" r="4" fill="#111" />
          </svg>
          <span className="mt-[25px] text-[34px] leading-[40px]">机器人</span>
        </div>
        <div className="ml-[28px] flex h-[154px] w-[324px] items-center justify-center rounded-full bg-[#2ec288] text-[54px] font-bold text-white">开仓</div>
        <div className="ml-[27px] flex h-[154px] w-[323px] items-center justify-center rounded-full bg-[#f94f63] text-[54px] font-bold text-white">平仓</div>
      </div>

      {/* nav */}
      <div className="mt-[105px] flex items-start pl-[324px]">
        <div className="mt-[4px] flex h-[42px] w-[52px] flex-col justify-between">
          <div className="h-[7px] rounded-[2px] bg-[#a8a8a8]" />
          <div className="h-[7px] rounded-[2px] bg-[#a8a8a8]" />
          <div className="h-[7px] rounded-[2px] bg-[#a8a8a8]" />
        </div>
        <svg className="ml-[221px]" width="66" height="50" viewBox="0 0 66 50" fill="none" stroke="#a8a8a8" strokeWidth="6">
          <path d="M3 26L33 3L63 26" />
          <path d="M12 26V47H54V26" />
        </svg>
        <svg className="ml-[220px]" width="56" height="50" viewBox="0 0 56 50" fill="none">
          <path d="M2 14L20 1V27Z" fill="#a8a8a8" />
          <path d="M14 14H53V47H12" stroke="#a8a8a8" strokeWidth="6" />
        </svg>
      </div>

      {/* floating bubble */}
      <div className="absolute left-[1170px] top-[2087px] h-[140px] w-[90px] rounded-l-[70px] bg-gradient-to-b from-[#f4b4f8] to-[#a5a8fc]">
        <div className="absolute left-[25px] top-[55px] h-[26px] w-[13px] rounded-full bg-white" />
        <div className="absolute left-[57px] top-[55px] h-[26px] w-[13px] rounded-full bg-white" />
      </div>
    </div>
  );
}
